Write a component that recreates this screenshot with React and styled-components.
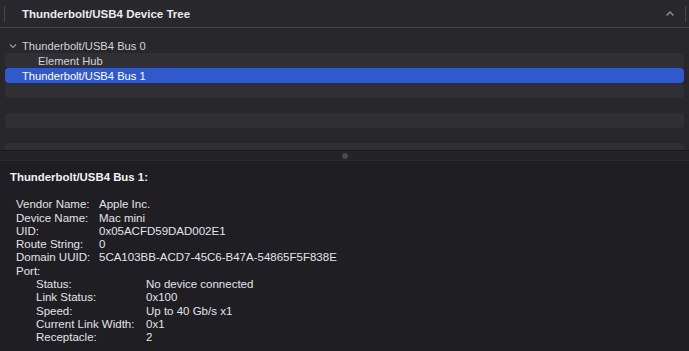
import React from "react";
import styled, { createGlobalStyle } from "styled-components";

const GlobalStyle = createGlobalStyle`
	html, body {
		margin: 0;
		padding: 0;
		background: #1f1e22;
	}
	* {
		box-sizing: border-box;
	}
`;

const Window = styled.div`
	width: 689px;
	height: 351px;
	display: flex;
	flex-direction: column;
	overflow: hidden;
	font-family: "Liberation Sans", Arial, sans-serif;
	color: #dedde2;
	background: #1f1e22;
`;

const Header = styled.div`
	height: 28px;
	flex: none;
	display: flex;
	align-items: center;
	background: #29282d;
	border-bottom: 1px solid #47464b;
	padding: 0 3px 0 4px;
`;

const HeaderRule = styled.div`
	width: 1px;
	height: 16px;
	background: #48474c;
`;

const HeaderTitle = styled.div`
	flex: 1;
	padding-left: 17px;
	font-size: 11.5px;
	font-weight: bold;
	color: #ececef;
`;

const TreePane = styled.div`
	height: 122px;
	flex: none;
	overflow: hidden;
	background: #28272c;
	padding: 10px 5px 0 5px;
	display: flex;
	flex-direction: column;
`;

const TreeRow = styled.div`
	height: 15px;
	flex: none;
	display: flex;
	align-items: center;
	border-radius: 4px;
	padding-left: ${(p) => 17 + p.$indent * 16}px;
	font-size: 11.2px;
	color: ${(p) => (p.$selected ? "#ffffff" : "#d4d3d8")};
	background: ${(p) =>
		p.$selected ? "#3159cc" : p.$stripe ? "#302f34" : "transparent"};
`;

const Disclosure = styled.svg`
	width: 8px;
	height: 6px;
	margin-left: -13px;
	margin-right: 5px;
`;

const Splitter = styled.div`
	height: 11px;
	flex: none;
	display: flex;
	align-items: center;
	justify-content: center;
	background: #242328;
	border-top: 1px solid #19181c;
	border-bottom: 1px solid #2c2b30;
`;

const Dot = styled.div`
	width: 6px;
	height: 6px;
	border-radius: 50%;
	background: #4a494e;
`;

const Details = styled.div`
	flex: 1;
	padding: 10px 10px 0 10px;
	font-size: 11.5px;
	line-height: 13.3px;
	color: #e4e3e8;
`;

const DetailTitle = styled.div`
	font-weight: bold;
	font-size: 11.4px;
	color: #f2f2f4;
	margin-bottom: 14px;
`;

const Props = styled.div`
	display: grid;
	grid-template-columns: ${(p) => p.$labelWidth}px auto;
	margin-left: ${(p) => p.$indent}px;
	justify-content: start;
`;

const Port = styled.div`
	grid-column: 1 / -1;
`;

const rows = [
	{ label: "Thunderbolt/USB4 Bus 0", indent: 0, open: true },
	{ label: "Element Hub", indent: 1, stripe: true },
	{ label: "Thunderbolt/USB4 Bus 1", indent: 0, selected: true },
	{ label: "", stripe: true },
	{ label: "" },
	{ label: "", stripe: true },
	{ label: "" },
	{ label: "", stripe: true },
];

const info = [
	["Vendor Name:", "Apple Inc."],
	["Device Name:", "Mac mini"],
	["UID:", "0x05ACFD59DAD002E1"],
	["Route String:", "0"],
	["Domain UUID:", "5CA103BB-ACD7-45C6-B47A-54865F5F838E"],
];

const port = [
	["Status:", "No device connected"],
	["Link Status:", "0x100"],
	["Speed:", "Up to 40 Gb/s x1"],
	["Current Link Width:", "0x1"],
	["Receptacle:", "2"],
];

export default function App() {
	return (
		<>
			<GlobalStyle />
			<Window>
				<Header>
					<HeaderRule />
					<HeaderTitle>Thunderbolt/USB4 Device Tree</HeaderTitle>
					<svg width="10" height="7" viewBox="0 0 10 7" style={{ marginRight: 10 }}>
						<path d="M1.5 5.5 L5 2 L8.5 5.5" fill="none" stroke="#8c8b90" strokeWidth="1.5" />
					</svg>
					<HeaderRule />
				</Header>
				<TreePane>
					{rows.map((row, i) => (
						<TreeRow key={i} $indent={row.indent || 0} $stripe={row.stripe} $selected={row.selected}>
							{row.open && (
								<Disclosure viewBox="0 0 8 6">
									<path d="M1 1.5 L4 4.5 L7 1.5" fill="none" stroke="#9a999e" strokeWidth="1.2" />
								</Disclosure>
							)}
							{row.label}
						</TreeRow>
					))}
				</TreePane>
				<Splitter>
					<Dot />
				</Splitter>
				<Details>
					<DetailTitle>Thunderbolt/USB4 Bus 1:</DetailTitle>
					<Props $labelWidth={83} $indent={6}>
						{info.map(([k, v]) => (
							<React.Fragment key={k}>
								<span>{k}</span>
								<span>{v}</span>
							</React.Fragment>
						))}
						<Port>Port:</Port>
					</Props>
					<Props $labelWidth={110} $indent={26}>
						{port.map(([k, v]) => (
							<React.Fragment key={k}>
								<span>{k}</span>
								<span>{v}</span>
							</React.Fragment>
						))}
					</Props>
				</Details>
			</Window>
		</>
	);
}
